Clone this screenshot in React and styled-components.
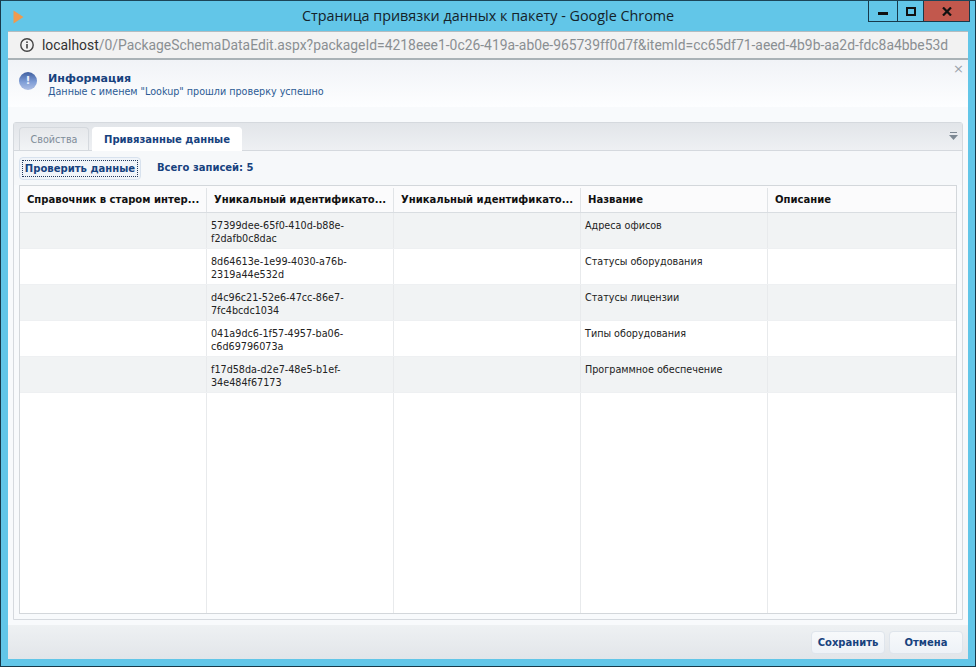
import React from 'react';
import styled, { createGlobalStyle } from 'styled-components';

const Global = createGlobalStyle`
  html, body { margin: 0; padding: 0; width: 976px; height: 667px; overflow: hidden; }
  * { box-sizing: border-box; }
  body { font-family: "DejaVu Sans", "Noto Sans", sans-serif; }
`;
const Frame = styled.div`
  width: 976px; height: 667px; background: #62c6e8; border: 1px solid #17394a;
  border-top-color: #1c4558; display: flex; flex-direction: column; padding: 0 7px 7px 7px;
`;
const TitleBar = styled.div`
  height: 30px; flex: none; display: flex; align-items: flex-start; position: relative; margin: 0 -7px 0 0;
`;
const Play = styled.svg`
  width: 11px; height: 14px; margin: 9px 0 0 5px; flex: none;
`;
const TitleText = styled.div`
  position: absolute; left: 0; right: 7px; top: 5px; text-align: center;
  font: 14.35px/20px "Open Sans", sans-serif; color: #14222a;
`;
const WinButtons = styled.div`
  margin-left: auto; margin-right: 5px; display: flex; height: 21px;
  border: 1px solid #17394a; border-top: none; flex: none;
`;
const WinBtn = styled.div`
  width: ${p => p.$w}px; display: flex; align-items: center; justify-content: center;
  background: ${p => p.$bg || 'transparent'};
  & + & { border-left: 1px solid #17394a; }
`;
const AddressBar = styled.div`
  height: 29px; flex: none; background: #f2f2f2; border-top: 1px solid #b4bcc0;
  border-bottom: 2px solid #aab2b6; display: flex; align-items: center; padding-left: 11px; gap: 7px;
  font: 13.88px/20px Roboto, sans-serif; color: #8a8f92; white-space: nowrap; overflow: hidden;
`;
const Host = styled.span` color: #333; `;
const Page = styled.div`
  flex: 1; min-height: 0; display: flex; flex-direction: column; background: #f8fafc;
`;
const Notice = styled.div`
  height: 47px; flex: none; position: relative; display: flex; padding: 11px 0 0 11px; gap: 11px;
  background: linear-gradient(#f1f3f7, #fdfeff);
`;
const NoticeIcon = styled.div`
  width: 18px; height: 18px; border-radius: 50%; margin-top: 1px; flex: none;
  background: linear-gradient(#3f5f9f, #7f9dd6 55%, #aebfe4);
  color: #e8eefa; font: bold 11px/17px "DejaVu Sans", sans-serif; text-align: center;
`;
const NoticeTitle = styled.div`
  font: bold 11.1px/13px "DejaVu Sans", sans-serif; color: #17427e; margin-top: 1px;
`;
const NoticeText = styled.div`
  font: 9.6px/13px "DejaVu Sans", sans-serif; color: #2c5a94;
`;
const Close = styled.div`
  position: absolute; right: 4px; top: 2px; font: 13px/14px "DejaVu Sans", sans-serif; color: #9aa3ab;
`;
const Body = styled.div`
  flex: 1; min-height: 0; padding: 15px 5px 5px 5px; display: flex; background: #f8fafc;
`;
const Panel = styled.div`
  flex: 1; display: flex; flex-direction: column; border: 1px solid #d5d9de; border-radius: 3px 3px 0 0;
  position: relative; min-width: 0;
`;
const TabStrip = styled.div`
  height: 28px; flex: none; display: flex; align-items: flex-end; gap: 3px; padding-left: 5px;
  background: linear-gradient(#e2e5e9, #eef0f3); border-bottom: 1px solid #d5d9de;
`;
const Tab = styled.div`
  width: ${p => p.$w}px; text-align: center;
  height: ${p => p.$active ? 24 : 23}px; margin-bottom: ${p => p.$active ? -1 : 0}px;
  border-radius: 4px 4px 0 0;
  font: ${p => p.$active ? 'bold 10.05px' : 'normal 9.6px'}/24px "DejaVu Sans", sans-serif;
  color: ${p => p.$active ? '#17427e' : '#7f8c99'};
  background: ${p => p.$active ? '#fff' : 'linear-gradient(#e6e8eb, #f2f4f6)'};
  border: 1px solid ${p => p.$active ? '#fff' : '#d5d9de'}; border-bottom: none;
`;
const TabMenu = styled.svg`
  position: absolute; right: 4px; top: 9px; width: 9px; height: 9px;
`;
const Toolbar = styled.div`
  height: 34px; flex: none; display: flex; align-items: center; padding: 0 5px; gap: 16px; background: #f6f8fa;
`;
const ToolButton = styled.div`
  height: 23px; width: 122px; border: 1px solid #d8e2ee; border-radius: 4px; background: #f0f4f9;
  display: flex; align-items: center; justify-content: center; padding: 2px;
`;
const ToolLabel = styled.span`
  display: block; border: 1px dotted #22385a; padding: 0 1px; width: 100%; text-align: center;
  font: bold 10.05px/15px "DejaVu Sans", sans-serif; color: #17427e; white-space: nowrap;
`;
const Total = styled.div`
  font: bold 10px/14px "DejaVu Sans", sans-serif; color: #17427e;
`;
const GridBox = styled.div`
  flex: 1; min-height: 0; margin: 0 5px 5px 5px; border: 1px solid #d3d7db; background: #fff;
  display: flex; flex-direction: column;
`;
const Columns = `display: grid; grid-template-columns: 187px 187px 187px 187px 1fr;`;
const HeadRow = styled.div`
  ${Columns} height: 27px; flex: none; background: #fbfbfc; border-bottom: 1px solid #d9dde1;
`;
const Head = styled.div`
  padding: 0 7px; font: bold 10.05px/24px "DejaVu Sans", sans-serif; color: #111;
  white-space: nowrap; border-right: 1px solid #e1e4e7; margin-top: 2px;
  &:last-child { border-right: none; }
`;
const Row = styled.div`
  ${Columns} height: 36px; flex: none; background: ${p => p.$odd ? '#f1f3f4' : '#fff'};
  border-bottom: 1px solid #eef0f2;
`;
const Cell = styled.div`
  padding: 6px 4px 0 4px; font: 9.65px/13px "DejaVu Sans", sans-serif; color: #222;
  border-right: 1px solid #e8eaec; overflow-wrap: anywhere;
  &:last-child { border-right: none; }
`;
const Filler = styled.div`
  ${Columns} flex: 1;
`;
const FillCol = styled.div`
  border-right: 1px solid #e8eaec;
  &:last-child { border-right: none; }
`;
const Footer = styled.div`
  height: 34px; flex: none; display: flex; justify-content: flex-end; align-items: flex-start; gap: 4px;
  padding: 6px 5px 0 0; background: linear-gradient(#eef1f3, #e2e5e9);
`;
const FootButton = styled.div`
  width: 74px; height: 23px; border: 1px solid #dfe5ec; border-radius: 4px;
  background: linear-gradient(#f7f9fb, #eef2f7); text-align: center;
  font: bold 10px/22px "DejaVu Sans", sans-serif; color: #17427e;
`;

const rows = [
  ['57399dee-65f0-410d-b88e-f2dafb0c8dac', 'Адреса офисов'],
  ['8d64613e-1e99-4030-a76b-2319a44e532d', 'Статусы оборудования'],
  ['d4c96c21-52e6-47cc-86e7-7fc4bcdc1034', 'Статусы лицензии'],
  ['041a9dc6-1f57-4957-ba06-c6d69796073a', 'Типы оборудования'],
  ['f17d58da-d2e7-48e5-b1ef-34e484f67173', 'Программное обеспечение'],
];
const heads = ['Справочник в старом интер...', 'Уникальный идентификато...', 'Уникальный идентификато...', 'Название', 'Описание'];

export default function App() {
  return (
    <>
      <Global />
      <Frame>
        <TitleBar>
          <Play viewBox="0 0 11 14"><path d="M0.5 0.5 L10.5 7 L0.5 13.5 Z" fill="#ee9a4d" /></Play>
          <TitleText>Страница привязки данных к пакету - Google Chrome</TitleText>
          <WinButtons>
            <WinBtn $w={28}><svg width="10" height="4" viewBox="0 0 10 4" style={{ marginTop: 5 }}><rect width="10" height="3" fill="#111" /></svg></WinBtn>
            <WinBtn $w={26}><svg width="10" height="9" viewBox="0 0 10 9"><rect x="1" y="1" width="8" height="7" fill="none" stroke="#111" strokeWidth="2" /></svg></WinBtn>
            <WinBtn $w={46} $bg="#c2584d"><svg width="10" height="9" viewBox="0 0 10 9"><path d="M1 0.5 L9 8.5 M9 0.5 L1 8.5" stroke="#111" strokeWidth="2.2" /></svg></WinBtn>
          </WinButtons>
        </TitleBar>
        <AddressBar>
          <svg width="16" height="16" viewBox="0 0 16 16" style={{ flex: 'none' }}>
            <circle cx="8" cy="8" r="6.2" fill="none" stroke="#444" strokeWidth="1.4" />
            <rect x="7.2" y="7" width="1.6" height="4.5" fill="#444" />
            <rect x="7.2" y="4.4" width="1.6" height="1.6" fill="#444" />
          </svg>
          <span><Host>localhost</Host>/0/PackageSchemaDataEdit.aspx?packageId=4218eee1-0c26-419a-ab0e-965739ff0d7f&amp;itemId=cc65df71-aeed-4b9b-aa2d-fdc8a4bbe53d</span>
        </AddressBar>
        <Page>
          <Notice>
            <NoticeIcon>!</NoticeIcon>
            <div>
              <NoticeTitle>Информация</NoticeTitle>
              <NoticeText>Данные с именем "Lookup" прошли проверку успешно</NoticeText>
            </div>
            <Close>×</Close>
          </Notice>
          <Body>
            <Panel>
              <TabStrip>
                <Tab $w={70}>Свойства</Tab>
                <Tab $w={150} $active>Привязанные данные</Tab>
              </TabStrip>
              <TabMenu viewBox="0 0 9 9">
                <rect x="1" y="0" width="7" height="1" fill="#7d8893" />
                <path d="M0 3 H9 L4.5 8 Z" fill="#7d8893" />
              </TabMenu>
              <Toolbar>
                <ToolButton><ToolLabel>Проверить данные</ToolLabel></ToolButton>
                <Total>Всего записей: 5</Total>
              </Toolbar>
              <GridBox>
                <HeadRow>
                  {heads.map((h, i) => <Head key={i}>{h}</Head>)}
                </HeadRow>
                {rows.map((r, i) => (
                  <Row key={r[0]} $odd={i % 2 === 0}>
                    <Cell />
                    <Cell>{r[0]}</Cell>
                    <Cell />
                    <Cell>{r[1]}</Cell>
                    <Cell />
                  </Row>
                ))}
                <Filler>
                  <FillCol /><FillCol /><FillCol /><FillCol /><FillCol />
                </Filler>
              </GridBox>
            </Panel>
          </Body>
          <Footer>
            <FootButton>Сохранить</FootButton>
            <FootButton>Отмена</FootButton>
          </Footer>
        </Page>
      </Frame>
    </>
  );
}
